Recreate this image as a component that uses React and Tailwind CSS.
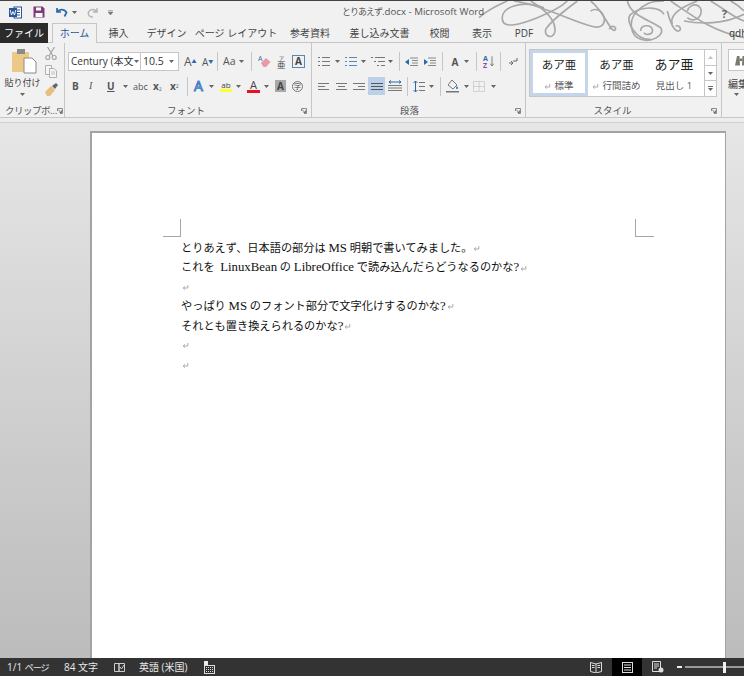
import React from "react";

const TABS = [
  { label: "挿入", cls: "ml-[12px] w-[19px]" },
  { label: "デザイン", cls: "ml-[23px] w-[31px]" },
  { label: "ページ レイアウト", cls: "ml-[23px] w-[62px]" },
  { label: "参考資料", cls: "ml-[24px] w-[38px]" },
  { label: "差し込み文書", cls: "ml-[23px] w-[55px]" },
  { label: "校閲", cls: "ml-[23px] w-[19px]" },
  { label: "表示", cls: "ml-[23px] w-[20px]" },
  { label: "PDF", cls: "ml-[23px] w-[18px]" },
];

const Latin = ({ children }) => <span className="text-[12.800px]">{children}</span>;

const LINES = [
  <>とりあえず、日本語の部分は <Latin>MS</Latin> 明朝で書いてみました。</>,
  <>これを  <Latin>LinuxBean</Latin> の <Latin>LibreOffice</Latin> で読み込んだらどうなるのかな<Latin>?</Latin></>,
  null,
  <>やっぱり <Latin>MS</Latin> のフォント部分で文字化けするのかな<Latin>?</Latin></>,
  <>それとも置き換えられるのかな<Latin>?</Latin></>,
  null,
  null,
];

function Caret({ className = "" }) {
  return (
    <svg width="5" height="3" viewBox="0 0 5 3" className={`shrink-0 ${className}`}>
      <path d="M0 0h5L2.500 3z" fill="#666" />
    </svg>
  );
}

function Sep({ className = "" }) {
  return <div className={`w-px h-[19px] bg-[#c6c6c6] shrink-0 ${className}`} />;
}

function Launcher() {
  return (
    <svg width="6" height="6" viewBox="0 0 6 6" className="shrink-0">
      <path d="M.5 3V.5H5.500V5.500H3" fill="none" stroke="#8a8a8a" />
      <path d="M1 1.500 4 4.500M2.500 4.500H4.500V2.500" fill="none" stroke="#555" strokeWidth=".8" />
    </svg>
  );
}

function Lines({ w = 11, h = 9, rows, color = "#777", className = "" }) {
  return (
    <svg width={w} height={h} viewBox={`0 0 ${w} ${h}`} className={`shrink-0 ${className}`}>
      {rows.map((r, i) => (
        <rect key={i} x={r[0]} y={r[2]} width={r[1] - r[0]} height="1" fill={color} />
      ))}
    </svg>
  );
}

function Ret({ className = "" }) {
  return (
    <svg width="7" height="7" viewBox="0 0 7 7" className={`inline-block shrink-0 ${className}`}>
      <path d="M5.800 1v3H1.200M3 2.400 1.200 4l1.800 1.600" fill="none" stroke="#a3a3a3" strokeWidth=".9" />
    </svg>
  );
}

function WordLogo() {
  return (
    <svg width="13" height="13" viewBox="0 0 13 13">
      <rect x="5" y="1" width="7.500" height="11" fill="#fff" stroke="#2b579a" />
      <path d="M7 4h4M7 6.500h4M7 9h4" stroke="#2b579a" />
      <rect x="0" y="2" width="8" height="9" fill="#2b579a" />
      <path d="M1.200 4 2.500 9 4 5.500 5.500 9 6.800 4" fill="none" stroke="#fff" strokeWidth=".9" />
    </svg>
  );
}

function Flourish() {
  return (
    <svg
      viewBox="0 0 840 138"
      width="280"
      height="46"
      className="absolute right-0 top-0 pointer-events-none"
      fill="none"
      stroke="#a8a8a8"
      strokeWidth="5"
    >
      <path d="M45 50C80 20 110 10 130 0" />
      <path d="M240 20C170 -5 110 20 115 55C118 85 170 70 220 50C270 30 300 10 310 0" />
      <path d="M150 0C230 10 320 60 380 75C410 85 425 70 420 50C415 28 395 20 380 30" />
      <path d="M340 0C300 30 260 60 245 85C240 110 270 115 273 90C275 60 250 30 200 0" />
      <path d="M380 0C420 30 440 95 452 88C462 76 440 70 436 85" />
      <path d="M490 0C500 40 540 50 590 80C605 105 560 125 530 115C500 105 490 60 520 30C540 10 560 0 600 0" />
      <path d="M600 40C590 20 540 10 500 40C480 60 520 120 560 115" />
      <path d="M530 90C530 70 560 70 565 85C570 100 545 105 540 95" />
      <path d="M610 30C615 50 625 85 640 90C655 92 650 70 635 75" />
      <path d="M700 0C660 15 615 40 625 70" />
      <path d="M620 0C680 40 740 90 840 110" />
      <path d="M670 30C680 0 720 10 710 40C700 60 680 60 670 50" />
      <path d="M740 0C790 30 810 50 840 60" />
      <path d="M800 0C820 10 830 20 840 30" />
      <path d="M660 60C710 70 780 70 840 40" />
    </svg>
  );
}

function TitleBar() {
  return (
    <div className="h-[23px] border-t border-[#444] flex items-center shrink-0 relative">
      <div className="ml-[9px]"><WordLogo /></div>
      <svg width="12" height="12" viewBox="0 0 12 12" className="ml-[11px]">
        <path d="M.5.500H9.500L11.500 2.500V11.500H.5z" fill="#80397b" />
        <rect x="3" y="1.500" width="5" height="3" fill="#fff" />
        <rect x="2.500" y="7" width="7" height="4" fill="#fff" />
      </svg>
      <svg width="12" height="11" viewBox="0 0 12 11" className="ml-[11px]">
        <path d="M1 1v4h4M1.200 5C3 2 8 1.500 10.500 5.500L8.500 9.500" fill="none" stroke="#2b6aa8" strokeWidth="1.700" />
      </svg>
      <Caret className="ml-[4px]" />
      <svg width="11" height="11" viewBox="0 0 11 11" className="ml-[10px]">
        <path d="M10 1v4H6M9.800 5C8 2 3.500 1.500 1.500 5 .5 8 3 10.500 6 10" fill="none" stroke="#b4b4b4" strokeWidth="1.400" />
      </svg>
      <svg width="5" height="5" viewBox="0 0 5 5" className="ml-[10px]">
        <path d="M0 .5h5M0 2h5L2.500 5z" fill="#777" stroke="#777" strokeWidth=".5" />
      </svg>
      <span className="ml-[229px] text-[9.700px] text-[#555] whitespace-nowrap z-10">
        <span className="text-[9px] tracking-[-1px]">とりあえず</span>.docx - Microsoft Word
      </span>
      <Flourish />
      <span className="absolute right-[17px] top-[5px] text-[11px] font-bold text-[#666]">?</span>
    </div>
  );
}

function TabBar() {
  return (
    <div className="h-[20px] flex items-end shrink-0 relative border-b border-[#c6c6c6] text-[10px] text-[#444] whitespace-nowrap">
      <div className="w-[48px] shrink-0 h-[20px] -mb-px bg-[#2b2b2b] text-white flex items-center justify-center">ファイル</div>
      <div className="ml-[4px] w-[45px] shrink-0 h-[20px] -mb-px bg-[#f1f1f1] border border-b-0 border-[#c6c6c6] text-[#2b579a] flex items-center justify-center">
        ホーム
      </div>
      {TABS.map((t) => (
        <div key={t.label} className={`${t.cls} shrink-0 h-[20px] -mb-px flex items-center justify-center z-10`}>
          {t.label}
        </div>
      ))}
      <span className="ml-[196px] shrink-0 h-[20px] -mb-px flex items-center text-[#333] z-10">qdh</span>
    </div>
  );
}

function GroupLabel({ children, launcher = true, className = "" }) {
  return (
    <div className={`mt-auto h-[14px] -mb-px flex items-center text-[9.500px] text-[#555] whitespace-nowrap ${className}`}>
      <span className="flex-1 text-center">{children}</span>
      {launcher && <Launcher />}
    </div>
  );
}

function Clipboard() {
  return (
    <div className="w-[65px] shrink-0 border-r border-[#c6c6c6] flex flex-col h-full">
      <div className="flex pt-[4px]">
        <div className="w-[45px] flex flex-col items-center">
          <svg width="25" height="25" viewBox="0 0 25 25" className="mt-[2px] ml-[3px]">
            <rect x="0" y="3" width="17" height="20" fill="#edc987" />
            <rect x="5" y="0" width="8" height="5" fill="#8a8a8a" />
            <path d="M12 9H20L24 13V24H12z" fill="#fff" stroke="#8a8a8a" />
          </svg>
          <span className="mt-[2px] text-[9px] leading-[14px] text-[#444] whitespace-nowrap">貼り付け</span>
          <Caret className="mt-[3px]" />
        </div>
        <div className="flex flex-col">
          <svg width="12" height="13" viewBox="0 0 12 13">
            <path d="M2.500 0 8 9M9.500 0 4 9" stroke="#a5a5a5" strokeWidth="1.200" />
            <circle cx="2.800" cy="10.500" r="2" fill="none" stroke="#a5a5a5" strokeWidth="1.200" />
            <circle cx="9.200" cy="10.500" r="2" fill="none" stroke="#a5a5a5" strokeWidth="1.200" />
          </svg>
          <svg width="12" height="13" viewBox="0 0 12 13" className="mt-[5px]">
            <path d="M.5.500H6.500V9.500H.5z" fill="#f5f5f5" stroke="#b0b0b0" />
            <path d="M4.500 3.500H9L11.500 6V12.500H4.500z" fill="#f5f5f5" stroke="#b0b0b0" />
            <path d="M6 7h4M6 9h4" stroke="#c0c0c0" />
          </svg>
          <svg width="13" height="13" viewBox="0 0 13 13" className="mt-[5px]">
            <path d="M0 9 6 3 10 7 5 13H2z" fill="#e4bf7d" />
            <path d="M7 3 11 0 13 2 10 6z" fill="#666" />
          </svg>
        </div>
      </div>
      <GroupLabel className="pl-[5px] pr-[4px]"><span className="tracking-[-0.5px]">クリップボ…</span></GroupLabel>
    </div>
  );
}

function FontGroup() {
  return (
    <div className="w-[247px] shrink-0 border-r border-[#c6c6c6] flex flex-col h-full">
      <div className="pt-[9px] h-[28px] flex items-center text-[#555]">
        <div className="ml-[3px] w-[73px] h-[19px] bg-white border border-[#c6c6c6] flex items-center pl-[2px]">
          <span className="text-[10px] text-[#333] w-[62px] whitespace-nowrap">Century (本文</span>
          <Caret className="ml-[1px]" />
        </div>
        <div className="w-[38px] h-[19px] bg-white border border-l-0 border-[#c6c6c6] flex items-center pl-[2px]">
          <span className="text-[10.500px] text-[#333] w-[26px]">10.5</span>
          <Caret />
        </div>
        <span className="ml-[5px] w-[12px] text-[12px] leading-none whitespace-nowrap">A<sup className="text-[5px] text-[#2b6aa8]">▲</sup></span>
        <span className="ml-[6px] w-[11px] text-[10px] leading-none whitespace-nowrap">A<sup className="text-[5px] text-[#2b6aa8]">▼</sup></span>
        <Sep className="ml-[4px]" />
        <span className="ml-[5px] w-[13px] text-[10.500px]">Aa</span>
        <Caret className="ml-[3px]" />
        <Sep className="ml-[7px]" />
        <svg width="13" height="13" viewBox="0 0 13 13" className="ml-[6px]">
          <path d="M3 8 8 3 12.500 7 8 12H5.500z" fill="#e79aa5" />
          <text x="0" y="6" fontSize="7" fill="#2b6aa8">A</text>
        </svg>
        <svg width="9" height="14" viewBox="0 0 9 14" className="ml-[6px]">
          <text x="2" y="5" fontSize="5" fill="#444">ア</text>
          <text x="0" y="13" fontSize="8.500" fill="#444">亜</text>
        </svg>
        <span className="ml-[6px] w-[13px] h-[13px] border border-[#5a86b5] text-[10px] leading-[11px] text-center font-bold text-[#444]">A</span>
      </div>
      <div className="mt-[6px] h-[18px] flex items-center text-[#555]">
        <span className="ml-[7px] w-[8px] text-[10px] font-bold leading-none">B</span>
        <span className="ml-[9px] w-[8px] text-[10px] italic font-['Liberation_Serif',serif] leading-none">I</span>
        <span className="ml-[10px] w-[8px] text-[10px] font-bold underline leading-none">U</span>
        <Caret className="ml-[8px]" />
        <span className="ml-[5px] w-[13px] text-[9px] leading-none whitespace-nowrap">abc</span>
        <span className="ml-[7px] w-[10px] text-[10px] font-bold leading-none whitespace-nowrap">x<sub className="text-[5px] font-normal text-[#2b6aa8]">2</sub></span>
        <span className="ml-[7px] w-[10px] text-[10px] font-bold leading-none whitespace-nowrap">x<sup className="text-[5px] font-normal text-[#2b6aa8]">2</sup></span>
        <Sep className="ml-[7px]" />
        <span className="ml-[6px] w-[12px] text-[14px] leading-none text-[#dbe8f6] [-webkit-text-stroke:1px_#3f7fc1]">A</span>
        <Caret className="ml-[3px]" />
        <div className="ml-[6px] w-[12px] flex flex-col items-center">
          <span className="text-[8px] leading-[9px] text-[#444]">ab</span>
          <div className="w-[12px] h-[3px] bg-[#ffff2e]" />
        </div>
        <Caret className="ml-[4px]" />
        <div className="ml-[6px] w-[13px] flex flex-col items-center">
          <span className="text-[11px] leading-[10px] text-[#444]">A</span>
          <div className="w-[13px] h-[3px] bg-[#e81123]" />
        </div>
        <Caret className="ml-[4px]" />
        <span className="ml-[6px] w-[11px] h-[12px] bg-[#a8a8a8] text-[10px] leading-[12px] text-center font-bold text-[#444]">A</span>
        <span className="ml-[6px] w-[11px] h-[11px] rounded-full border border-[#777] text-[7px] leading-[9px] text-center text-[#444]">字</span>
      </div>
      <GroupLabel className="pr-[4px]"><span className="pl-[6px]">フォント</span></GroupLabel>
    </div>
  );
}

function Paragraph() {
  const bullets = [[0, 2, 1], [4, 12, 1], [0, 2, 5], [4, 12, 5], [0, 2, 9], [4, 12, 9]];
  return (
    <div className="w-[214px] shrink-0 border-r border-[#c6c6c6] flex flex-col h-full">
      <div className="pt-[9px] h-[28px] flex items-center">
        <Lines w={12} h={11} rows={bullets} className="ml-[6px]" />
        <Caret className="ml-[5px]" />
        <Lines w={12} h={11} rows={bullets} color="#5a86b5" className="ml-[5px]" />
        <Caret className="ml-[4px]" />
        <Lines w={14} h={11} rows={[[0, 2, 1], [4, 14, 1], [3, 5, 5], [7, 14, 5], [6, 8, 9], [10, 14, 9]]} className="ml-[5px]" />
        <Caret className="ml-[3px]" />
        <Sep className="ml-[6px]" />
        <svg width="13" height="10" viewBox="0 0 13 10" className="ml-[5px]">
          <path d="M5 1h8M7 3.500h6M7 6h6M5 8.500h8" stroke="#888" />
          <path d="M0 5 4 2v6z" fill="#2b6aa8" />
        </svg>
        <svg width="13" height="10" viewBox="0 0 13 10" className="ml-[5px]">
          <path d="M5 1h8M7 3.500h6M7 6h6M5 8.500h8" stroke="#888" />
          <path d="M5 5 1 2v6z" fill="#2b6aa8" />
        </svg>
        <Sep className="ml-[6px]" />
        <div className="ml-[5px] w-[14px] h-[13px] flex items-end justify-center text-[10px] leading-[11px] font-bold text-[#555]">A</div>
        <Caret className="ml-[2px]" />
        <Sep className="ml-[7px]" />
        <svg width="7" height="14" viewBox="0 0 7 14" className="ml-[6px]">
          <text x="0" y="6" fontSize="7" fontWeight="700" fill="#2b6aa8">A</text>
          <text x="0" y="13" fontSize="7" fontWeight="700" fill="#8e4a9e">Z</text>
        </svg>
        <svg width="4" height="13" viewBox="0 0 5 13"><path d="M2.500 0v12M0 9l2.500 3L5 9" fill="none" stroke="#666" /></svg>
        <Sep className="ml-[6px]" />
        <svg width="10" height="10" viewBox="0 0 10 10" className="ml-[7px]">
          <path d="M9 1v3H5M1 6h4M3 4 5 6 3 8" fill="none" stroke="#666" />
        </svg>
      </div>
      <div className="mt-[6px] h-[18px] flex items-center">
        <Lines rows={[[0, 11, 1], [0, 7, 4], [0, 11, 7]]} className="ml-[6px]" />
        <Lines rows={[[0, 11, 1], [2, 9, 4], [0, 11, 7]]} className="ml-[7px]" />
        <Lines w={12} rows={[[0, 12, 1], [5, 12, 4], [0, 12, 7]]} className="ml-[6px]" />
        <div className="ml-[3px] w-[17px] h-[18px] bg-[#bcd0ea] flex items-center justify-center">
          <Lines w={12} rows={[[0, 12, 1], [0, 12, 4], [0, 12, 7]]} color="#555" />
        </div>
        <svg width="14" height="13" viewBox="0 0 14 13" className="ml-[3px]">
          <path d="M0 5.500h14M0 8h14M0 10.500h14" stroke="#777" />
          <path d="M1 2h12M1 2l2-1.500M1 2l2 1.500M13 2l-2-1.500M13 2l-2 1.500" stroke="#2b6aa8" />
        </svg>
        <Sep className="ml-[5px]" />
        <svg width="12" height="13" viewBox="0 0 12 13" className="ml-[5px]">
          <path d="M2.500 1v11M.5 3l2-2 2 2M.5 10l2 2 2-2" fill="none" stroke="#2b6aa8" />
          <path d="M6 2.500h6M6 6.500h6M6 10.500h6" stroke="#777" />
        </svg>
        <Caret className="ml-[4px]" />
        <Sep className="ml-[6px]" />
        <svg width="13" height="14" viewBox="0 0 13 14" className="ml-[5px]">
          <path d="M2 6 6 1l5 5-4 4z" fill="#f2f2f2" stroke="#777" />
          <path d="M11 7c1 1.500 1.500 3 0 3s-1-1.500 0-3z" fill="#2b6aa8" />
          <rect x="0" y="12" width="13" height="1.500" fill="#777" />
        </svg>
        <Caret className="ml-[5px]" />
        <svg width="12" height="11" viewBox="0 0 12 11" className="ml-[4px]">
          <path d="M.5.5h11v10H.5zM6 .5v10M.5 5.500h11" fill="none" stroke="#b5b5b5" strokeDasharray="1 1" />
        </svg>
        <Caret className="ml-[6px]" />
      </div>
      <GroupLabel className="pr-[4px]"><span className="pr-[8px]">段落</span></GroupLabel>
    </div>
  );
}

function StyleItem({ cls, sample, label, mark }) {
  return (
    <div className={`${cls} h-full flex flex-col items-center whitespace-nowrap`}>
      {sample}
      <span className="mt-auto mb-[3px] text-[9.500px] leading-[14px] text-[#555] flex items-center gap-[3px]">
        {mark && <Ret />}
        {label}
      </span>
    </div>
  );
}

function Styles() {
  return (
    <div className="w-[196px] shrink-0 border-r border-[#c6c6c6] flex flex-col h-full">
      <div className="pt-[6px] pl-[3px]">
        <div className="w-[188px] h-[48px] bg-white border border-[#c6c6c6] flex">
          <div className="w-[58px] h-full border-[3px] border-[#c5d5ea] flex flex-col items-center whitespace-nowrap">
            <span className="mt-[4px] text-[11.500px] leading-[16px] text-[#222]">あア亜</span>
            <span className="mt-auto text-[9.500px] leading-[14px] text-[#555] flex items-center gap-[3px]"><Ret />標準</span>
          </div>
          <StyleItem
            cls="w-[57px]"
            mark
            label="行間詰め"
            sample={<span className="mt-[7px] text-[11.500px] leading-[16px] text-[#222]">あア亜</span>}
          />
          <StyleItem
            cls="w-[58px]"
            label="見出し 1"
            sample={<span className="mt-[5px] text-[13px] leading-[18px] text-[#222]">あア亜</span>}
          />
          <div className="ml-auto w-[12px] h-full border-l border-[#c6c6c6] flex flex-col">
            <div className="h-[16px] flex items-center justify-center border-b border-[#c6c6c6]">
              <svg width="5" height="3" viewBox="0 0 5 3"><path d="M0 3h5L2.500 0z" fill="#c0c0c0" /></svg>
            </div>
            <div className="h-[15px] flex items-center justify-center border-b border-[#c6c6c6]"><Caret /></div>
            <div className="flex-1 flex flex-col items-center justify-center gap-px">
              <div className="w-[5px] h-px bg-[#666]" />
              <Caret />
            </div>
          </div>
        </div>
      </div>
      <GroupLabel className="pr-[4px]"><span className="pr-[12px]">スタイル</span></GroupLabel>
    </div>
  );
}

function Editing() {
  return (
    <div className="flex-1 min-w-0 overflow-hidden flex flex-col h-full">
      <div className="mt-[6px] ml-[6px] w-[30px] h-[22px] bg-white border border-[#c6c6c6] pl-[5px] flex items-center">
        <svg width="14" height="11" viewBox="0 0 14 11">
          <path d="M1 10.500 3 1H5.500L6 10.500zM13 10.500 11 1H8.500L8 10.500z" fill="#7c7a6e" />
          <rect x="5.500" y="3.500" width="3" height="2.500" fill="#7c7a6e" />
        </svg>
      </div>
      <span className="ml-[6px] mt-[6px] text-[10px] leading-[14px] text-[#444] whitespace-nowrap">編集</span>
      <Caret className="ml-[12px] mt-[2px]" />
    </div>
  );
}

function Ribbon() {
  return (
    <div className="h-[75px] shrink-0 flex border-b border-[#c6c6c6]">
      <Clipboard />
      <FontGroup />
      <Paragraph />
      <Styles />
      <Editing />
    </div>
  );
}

function Page() {
  return (
    <div className="ml-[90px] mt-[8px] w-[636px] flex-1 bg-white border-l-2 border-t-2 border-r border-[#a3a3a3] pt-[86px] px-[43px]">
      <div className="flex justify-between">
        <div className="w-[18px] h-[18px] border-r border-b border-[#a6a6a6] ml-[28px]" />
        <div className="w-[19px] h-[18px] border-l border-b border-[#a6a6a6] mr-[28px]" />
      </div>
      <div className="ml-[46px] mt-[2px] font-['Liberation_Serif','Noto_Sans_CJK_JP',serif] text-[11.200px] leading-[19.400px] text-[#111]">
        {LINES.map((t, i) => (
          <div key={i} className="h-[19.400px] flex items-center whitespace-pre">
            <span>{t}</span>
            <Ret className="ml-[1px]" />
          </div>
        ))}
      </div>
    </div>
  );
}

function StatusBar() {
  return (
    <div className="h-[18px] shrink-0 bg-[#333] text-[#e8e8e8] text-[10px] flex items-center whitespace-nowrap">
      <span className="ml-[7px] w-[42px]">1/1 <span className="text-[9px] tracking-[-1px]">ページ</span></span>
      <span className="ml-[15px] w-[34px]">84 文字</span>
      <svg width="11" height="11" viewBox="0 0 11 11" className="ml-[16px]">
        <path d="M.5 1.500h4.500v8H.5zM5 1.500h5.500v8H5z" fill="none" stroke="#ccc" />
        <path d="M6 5 7.500 7 10 3" fill="none" stroke="#ccc" />
      </svg>
      <span className="ml-[14px] w-[50px]">英語 (米国)</span>
      <svg width="11" height="13" viewBox="0 0 11 13" className="ml-[15px]">
        <rect x="0" y="0" width="4" height="4" fill="#eee" />
        <rect x=".5" y="4.500" width="10" height="8" fill="none" stroke="#ddd" />
        <path d="M2 6.500h7M2 8.500h7M2 10.500h7" stroke="#ddd" strokeDasharray="1 1" />
      </svg>
      <svg width="12" height="12" viewBox="0 0 12 12" className="ml-[375px]">
        <path d="M.5 1.500 6 3l5.500-1.500v9L6 12 .5 10.500z" fill="none" stroke="#ddd" />
        <path d="M6 3v9M2 4.500h2.500M2 6.500h2.500M7.500 4.500H10M7.500 6.500H10" stroke="#ddd" />
      </svg>
      <div className="ml-[10px] w-[30px] h-[18px] bg-black flex items-center justify-center">
        <svg width="11" height="11" viewBox="0 0 11 11">
          <rect x=".5" y=".5" width="10" height="10" fill="none" stroke="#ddd" />
          <path d="M2 3h7M2 5.500h7M2 8h7" stroke="#ddd" />
        </svg>
      </div>
      <svg width="12" height="12" viewBox="0 0 12 12" className="ml-[10px]">
        <path d="M.5.5h8v10h-8zM2 3h5M2 5h5M2 7h3" fill="none" stroke="#ddd" />
        <circle cx="9" cy="9" r="2.500" fill="#ddd" />
      </svg>
      <div className="ml-[13px] w-[5px] h-[2px] bg-[#eee]" />
      <div className="ml-[3px] flex-1 h-[2px] bg-[#9a9a9a] flex items-center">
        <div className="ml-[38px] w-[3px] h-[11px] bg-[#f2f2f2] shrink-0" />
      </div>
    </div>
  );
}

export default function App() {
  return (
    <div className="w-[744px] h-[676px] overflow-hidden flex flex-col bg-[#f1f1f1] font-['Open_Sans','Noto_Sans_CJK_JP',sans-serif]">
      <TitleBar />
      <TabBar />
      <Ribbon />
      <div className="h-[4px] shrink-0 bg-[#ededed]" />
      <div className="flex-1 min-h-0 flex flex-col bg-linear-to-b from-[#e6e6e6] to-[#bcbcbc] border-t border-[#d0d0d0]">
        <Page />
      </div>
      <StatusBar />
    </div>
  );
}
